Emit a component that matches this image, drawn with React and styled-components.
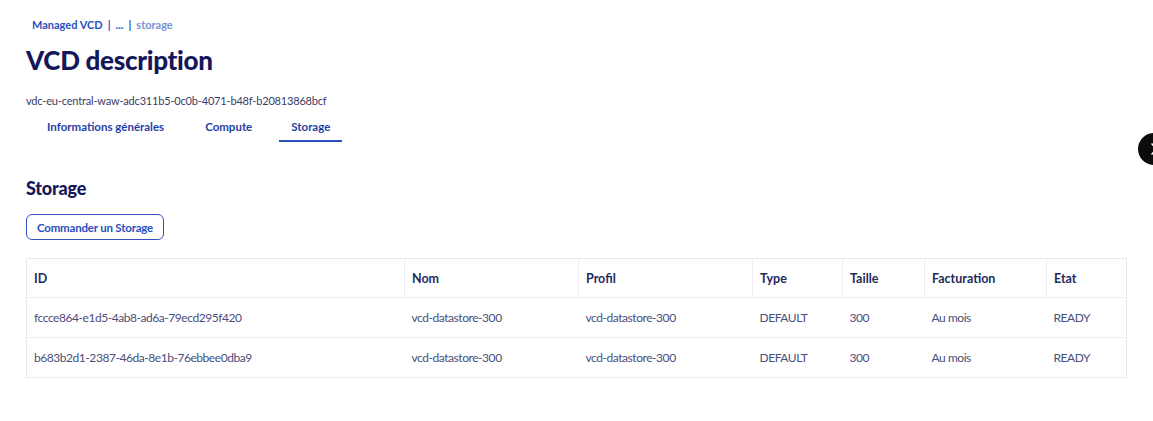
import React from "react";
import styled, { createGlobalStyle } from "styled-components";

const GlobalStyle = createGlobalStyle`
  html, body {
    margin: 0;
    padding: 0;
    background: #fff;
    font-family: Lato, "Liberation Sans", sans-serif;
  }
`;

const Page = styled.div`
  position: relative;
  width: 1153px;
  height: 421px;
  overflow: hidden;
  padding: 15px 27px 0 26px;
  box-sizing: border-box;
`;

const Breadcrumb = styled.nav`
  display: flex;
  align-items: center;
  gap: 5px;
  padding-left: 6px;
  font-size: 11px;
  font-weight: 700;
  color: #2a4fbf;
  height: 18px;
`;

const Crumb = styled.span`
  color: ${(p) => (p.$current ? "#7a93d6" : "#2a4fbf")};
`;

const Title = styled.h1`
  margin: 10px 0 0;
  font-size: 26px;
  font-weight: 900;
  letter-spacing: -0.3px;
  color: #16175a;
  line-height: 34px;
`;

const SubId = styled.div`
  margin-top: 16px;
  font-size: 11px;
  letter-spacing: -0.18px;
  color: #3a3d66;
  line-height: 16px;
`;

const Tabs = styled.div`
  display: flex;
  padding-left: 21px;
  margin-top: 7px;
`;

const Tab = styled.div`
  font-size: 11.5px;
  font-weight: 700;
  color: #1f3fa6;
  padding: 4px 0 7px;
  margin-right: ${(p) => p.$gap}px;
  border-bottom: 2px solid ${(p) => (p.$active ? "#2a4fbf" : "transparent")};
  ${(p) => (p.$active ? "padding-left: 12px; padding-right: 12px;" : "")}
`;

const SectionTitle = styled.h2`
  margin: 35px 0 0;
  font-size: 18px;
  font-weight: 900;
  letter-spacing: -0.2px;
  color: #16175a;
  line-height: 22px;
`;

const OutlineButton = styled.button`
  margin-top: 15px;
  height: 26px;
  padding: 0 10px;
  border: 1.5px solid #3450c0;
  border-radius: 6px;
  background: #fff;
  font-family: inherit;
  font-size: 11.5px;
  font-weight: 700;
  letter-spacing: -0.2px;
  color: #2a4fbf;
`;

const Table = styled.table`
  margin-top: 18px;
  width: 1100px;
  border-collapse: collapse;
  border: 1px solid #e8e9ef;
  table-layout: fixed;
`;

const Th = styled.th`
  text-align: left;
  font-size: 12.5px;
  font-weight: 700;
  color: #1f2a5e;
  height: 38px;
  padding: 0 7px;
  border-right: 1px solid #ececf1;
  border-bottom: 1px solid #ececf1;
  &:last-child {
    border-right: none;
  }
`;

const Td = styled.td`
  color: #4b4e7c;
  height: 39px;
  padding: 0 7px;
  border-bottom: 1px solid #ececf1;
  font-size: 12px;
  letter-spacing: -0.45px;
`;

const SideToggle = styled.div`
  position: absolute;
  left: 1138px;
  top: 133px;
  width: 32px;
  height: 32px;
  border-radius: 50%;
  background: #0c0c0c;
  display: flex;
  align-items: center;
  padding-left: 12px;
  box-sizing: border-box;
`;

const columns = [
  { label: "ID", width: 378 },
  { label: "Nom", width: 174 },
  { label: "Profil", width: 174 },
  { label: "Type", width: 90 },
  { label: "Taille", width: 82 },
  { label: "Facturation", width: 122 },
  { label: "Etat", width: 80 },
];

const rows = [
  ["fccce864-e1d5-4ab8-ad6a-79ecd295f420", "vcd-datastore-300", "vcd-datastore-300", "DEFAULT", "300", "Au mois", "READY"],
  ["b683b2d1-2387-46da-8e1b-76ebbee0dba9", "vcd-datastore-300", "vcd-datastore-300", "DEFAULT", "300", "Au mois", "READY"],
];

export default function App() {
  return (
    <>
      <GlobalStyle />
      <Page>
        <Breadcrumb>
          <Crumb>Managed VCD</Crumb>
          <Crumb>|</Crumb>
          <Crumb>...</Crumb>
          <Crumb>|</Crumb>
          <Crumb $current>storage</Crumb>
        </Breadcrumb>
        <Title>VCD description</Title>
        <SubId>vdc-eu-central-waw-adc311b5-0c0b-4071-b48f-b20813868bcf</SubId>
        <Tabs>
          <Tab $gap={41}>Informations générales</Tab>
          <Tab $gap={27}>Compute</Tab>
          <Tab $active>Storage</Tab>
        </Tabs>
        <SectionTitle>Storage</SectionTitle>
        <OutlineButton>Commander un Storage</OutlineButton>
        <Table>
          <colgroup>
            {columns.map((c) => (
              <col key={c.label} style={{ width: c.width }} />
            ))}
          </colgroup>
          <thead>
            <tr>
              {columns.map((c) => (
                <Th key={c.label}>{c.label}</Th>
              ))}
            </tr>
          </thead>
          <tbody>
            {rows.map((r, i) => (
              <tr key={i}>
                {r.map((cell, j) => (
                  <Td key={j}>{cell}</Td>
                ))}
              </tr>
            ))}
          </tbody>
        </Table>
        <SideToggle>
          <svg width="8" height="12" viewBox="0 0 8 12" fill="none">
            <path d="M2 1l5 5-5 5" stroke="#fff" strokeWidth="1.6" strokeLinecap="round" strokeLinejoin="round" />
          </svg>
        </SideToggle>
      </Page>
    </>
  );
}
